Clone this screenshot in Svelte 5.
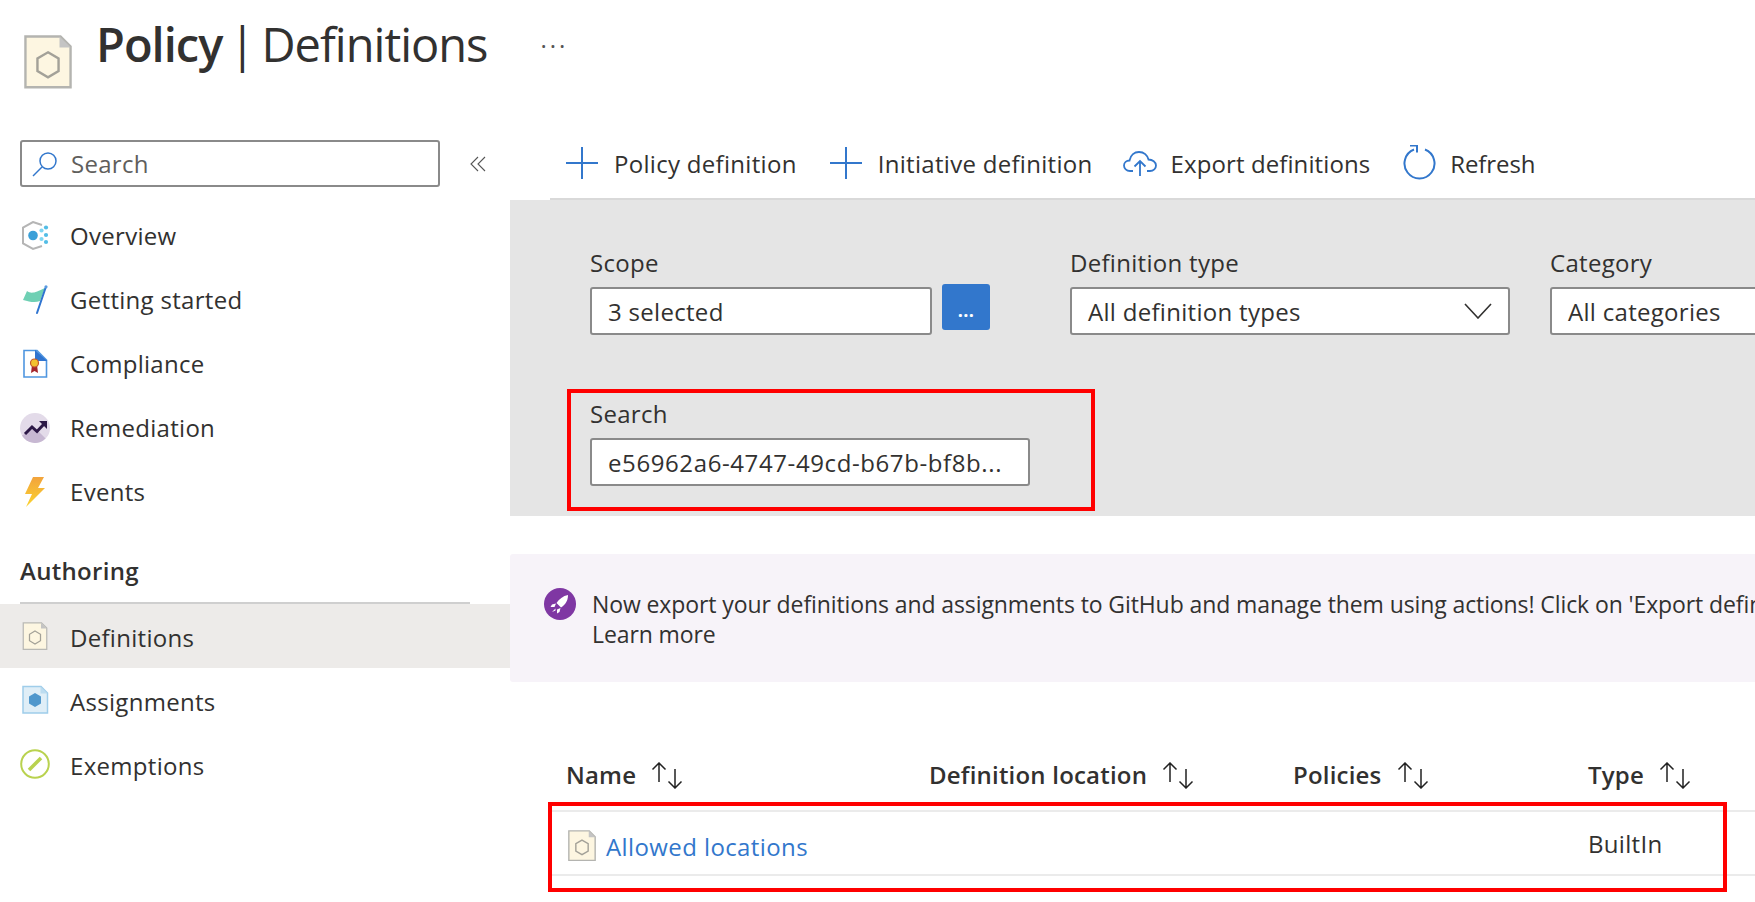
<script>
	const nav = [
		{ label: 'Overview', icon: 'overview' },
		{ label: 'Getting started', icon: 'started' },
		{ label: 'Compliance', icon: 'compliance' },
		{ label: 'Remediation', icon: 'remediation' },
		{ label: 'Events', icon: 'events' }
	];
	const authoring = [
		{ label: 'Definitions', icon: 'definition', active: true },
		{ label: 'Assignments', icon: 'assignment' },
		{ label: 'Exemptions', icon: 'exemption' }
	];
	const columns = ['Name', 'Definition location', 'Policies', 'Type'];
</script>

{#snippet policyDoc(size)}
	<svg width={size} height={size * 1.12} viewBox="0 0 50 56">
		<path d="M1.500 1.500H38L48.500 12V54.500H1.500Z" fill="#fdf6e1" stroke="#b4b4b0" stroke-width="2.500" />
		<path d="M37 1.500V13H48.500Z" fill="#c4c4c4" />
		<path d="M25 18L36 24.500V37.500L25 44L14 37.500V24.500Z" fill="none" stroke="#a3a198" stroke-width="2.500" />
	</svg>
{/snippet}

{#snippet navIcon(name)}
	<svg class="nav-icon" width="30" height="30" viewBox="0 0 30 30">
		{#if name === 'overview'}
			<path d="M22 4L13 1L3 6.500V22.500L13 28L22 25" fill="none" stroke="#b5b5b5" stroke-width="2" />
			<circle cx="13" cy="14.500" r="4.800" fill="#3aa0d8" />
			<circle cx="26" cy="6.500" r="2.100" fill="#52bde6" />
			<circle cx="21.500" cy="9.500" r="2.100" fill="#7fd6f2" />
			<circle cx="26" cy="14" r="2.100" fill="#52bde6" />
			<circle cx="21.500" cy="18" r="2.100" fill="#7fd6f2" />
			<circle cx="26" cy="21" r="2.100" fill="#52bde6" />
		{:else if name === 'started'}
			<path d="M3 15L7 6C11 9 15 8 25 3L20 16C15 18 10 17 3 15Z" fill="#6fd0b4" />
			<path d="M17 28L25.500 3" stroke="#2f74d0" stroke-width="2" stroke-linecap="round" />
			<circle cx="26" cy="1.800" r="1.600" fill="#5a9be0" />
		{:else if name === 'compliance'}
			<path d="M4 1.500H17L26.500 11V28H4Z" fill="#fff" stroke="#4f96e0" stroke-width="1.600" />
			<path d="M15 0.700L27.300 12H15Z" fill="#2f74d0" />
			<path d="M12 16L11 24L14.500 22L18 24L17 16Z" fill="#a4262c" />
			<circle cx="14.500" cy="14" r="4" fill="#f2c22f" stroke="#c4572d" stroke-width="1.200" />
		{:else if name === 'remediation'}
			<circle cx="15" cy="15" r="15" fill="#e3dbe9" />
			<path d="M2 22.500A15 15 0 0 0 25.600 25.600L15 15Z" fill="#c7b8d2" />
			<path d="M5 21L12 14L17 18.500L24 11" fill="none" stroke="#2c1846" stroke-width="3" />
			<path d="M19 8H27V16Z" fill="#2c1846" />
		{:else if name === 'events'}
			<defs>
				<linearGradient id="bolt" x1="0" y1="0" x2="0" y2="1">
					<stop offset="0" stop-color="#f2a33c" />
					<stop offset="1" stop-color="#fbd42f" />
				</linearGradient>
			</defs>
			<path d="M13 0H24L18 11H25L6 30L12 17H5Z" fill="url(#bolt)" />
		{:else if name === 'definition'}
			<svg x="2" y="1" width="26" height="28" viewBox="0 0 50 56">
				<path d="M1.500 1.500H38L48.500 12V54.500H1.500Z" fill="#fdf6e1" stroke="#b9b9b5" stroke-width="2.500" />
				<path d="M37 1.500V13H48.500Z" fill="#c4c4c4" />
				<path d="M25 18L36 24.500V37.500L25 44L14 37.500V24.500Z" fill="none" stroke="#a3a198" stroke-width="2.500" />
			</svg>
		{:else if name === 'assignment'}
			<path d="M3 1.500H21L27.500 8V28H3Z" fill="#dfeef7" stroke="#9fcdea" stroke-width="1.500" />
			<path d="M20.500 1.500V8.500H27.500Z" fill="#bcdcf0" />
			<path d="M15 8L21 11.500V18.500L15 22L9 18.500V11.500Z" fill="#4f97cc" />
		{:else if name === 'exemption'}
			<circle cx="15" cy="15" r="13.800" fill="#fff" stroke="#b9d24f" stroke-width="2" />
			<path d="M9 21L21 9" stroke="#b9d24f" stroke-width="3.500" />
		{/if}
	</svg>
{/snippet}

{#snippet plus()}
	<svg width="32" height="32" viewBox="0 0 32 32"><path d="M0 16H32M16 0V32" stroke="#3277cc" stroke-width="2" /></svg>
{/snippet}

{#snippet sortArrows()}
	<svg width="32" height="27" viewBox="0 0 32 27" fill="none" stroke="#222" stroke-width="1.500">
		<path d="M8 20V1M1.500 7.500L8 1L14.500 7.500" />
		<path d="M24 7V26M17.500 19.500L24 26L30.500 19.500" />
	</svg>
{/snippet}

<div class="page">
	<header class="title-bar">
		<div class="title-icon">{@render policyDoc(48)}</div>
		<h1><b>Policy</b> | Definitions</h1>
		<span class="more">···</span>
	</header>

	<div class="body">
		<aside>
			<div class="side-search-row">
				<div class="side-search">
					<svg width="26" height="26" viewBox="0 0 26 26" fill="none" stroke="#3277cc" stroke-width="1.500">
						<circle cx="16" cy="10" r="8" />
						<path d="M10 16L1 25" />
					</svg>
					<span>Search</span>
				</div>
				<svg class="collapse" width="16" height="16" viewBox="0 0 16 16" fill="none" stroke="#555" stroke-width="1.100">
					<path d="M8 1L1 8L8 15M15 1L8 8L15 15" />
				</svg>
			</div>

			<nav>
				<div class="general">
					{#each nav as item}
						<div class="nav-row">
							{@render navIcon(item.icon)}
							<span>{item.label}</span>
						</div>
					{/each}
				</div>
				<h2>Authoring</h2>
				<div class="authoring">
					{#each authoring as item}
						<div class="nav-row" class:active={item.active}>
							{@render navIcon(item.icon)}
							<span>{item.label}</span>
						</div>
					{/each}
				</div>
			</nav>
		</aside>

		<main>
			<div class="toolbar">
				<button>{@render plus()}<span>Policy definition</span></button>
				<button>{@render plus()}<span>Initiative definition</span></button>
				<button class="export">
					<svg width="34" height="28" viewBox="0 0 34 28" fill="none" stroke="#3277cc" stroke-width="1.800">
						<path d="M10 22H7C3.500 22 1 19.500 1 16.500C1 13.500 3.500 11.500 6.500 11.500C7.500 6 11.500 3 16 3C21 3 24.500 6.500 25.500 10.500C29.500 10.500 33 13 33 16.500C33 19.500 30.500 22 27 22H24" />
						<path d="M17 27V12M11.500 17.500L17 12L22.500 17.500" />
					</svg>
					<span>Export definitions</span>
				</button>
				<button class="refresh">
					<svg width="34" height="36" viewBox="0 0 34 36" fill="none" stroke="#3277cc" stroke-width="2">
						<path d="M22 4.500A15 15 0 1 1 11 4.500" />
						<path d="M7 0.500H14V7.500" />
					</svg>
					<span>Refresh</span>
				</button>
			</div>

			<section class="filters">
				<div class="filter-row">
					<div class="field scope">
						<label for="scope">Scope</label>
						<div class="box" id="scope">3 selected</div>
					</div>
					<div class="dots-btn">...</div>
					<div class="field type">
						<label for="type">Definition type</label>
						<div class="box" id="type">
							All definition types
							<svg width="28" height="16" viewBox="0 0 28 16" fill="none" stroke="#323130" stroke-width="1.600"><path d="M1 1L14 15L27 1" /></svg>
						</div>
					</div>
					<div class="field category">
						<label for="category">Category</label>
						<div class="box" id="category">All categories</div>
					</div>
				</div>
				<div class="search-field">
					<label for="policy-search">Search</label>
					<div class="box" id="policy-search">e56962a6-4747-49cd-b67b-bf8b...</div>
				</div>
			</section>

			<section class="banner">
				<svg width="32" height="32" viewBox="0 0 32 32">
					<circle cx="16" cy="16" r="16" fill="#7f37a3" />
					<path d="M24 7C19 8 15 11 12.500 15L17 19.500C21 17 24 13 24 7Z" fill="#fff" />
					<path d="M12 15.500L8 16.500L6.500 19L10.500 19ZM16.500 20L15.500 24L13 25.500L13 21.500ZM11.500 20.500L8 24L11.500 22.500Z" fill="#fff" />
				</svg>
				<p>Now export your definitions and assignments to GitHub and manage them using actions! Click on 'Export definitions' to get started.<br />Learn more</p>
			</section>

			<section class="table">
				<div class="thead">
					{#each columns as col}
						<div class="th"><span>{col}</span>{@render sortArrows()}</div>
					{/each}
				</div>
				<div class="row">
					<div class="name-cell">
						{@render policyDoc(28)}
						<a href="#allowed">Allowed locations</a>
					</div>
					<div></div>
					<div></div>
					<div class="type-cell">BuiltIn</div>
					<div class="highlight"></div>
				</div>
			</section>
		</main>
	</div>
</div>

<style>
	:global(body) {
		background: #fff;
		overflow: hidden;
	}

	.page {
		width: 1755px;
		height: 902px;
		overflow: hidden;
		font-family: 'Open Sans', 'Noto Sans', sans-serif;
		font-size: 24px;
		letter-spacing: 0.3px;
		color: #323130;
		white-space: nowrap;
	}

	.title-bar {
		height: 130px;
		display: flex;
		align-items: flex-start;
		box-sizing: border-box;
		padding-left: 24px;
	}

	.title-icon {
		margin-top: 35px;
		width: 48px;
	}

	h1 {
		margin: 11px 0 0 24px;
		font-size: 47px;
		line-height: 66px;
		font-weight: 400;
		letter-spacing: -1px;
		word-spacing: -4px;
	}

	h1 b {
		font-weight: 600;
	}

	.more {
		margin: 29px 0 0 53px;
		font-size: 24px;
		line-height: 34px;
		letter-spacing: 3px;
		color: #555;
	}

	.body {
		display: flex;
	}

	aside {
		width: 510px;
		flex: none;
	}

	.side-search-row {
		display: flex;
		align-items: center;
		margin: 10px 0 0 20px;
		height: 47px;
	}

	.side-search {
		width: 420px;
		height: 47px;
		box-sizing: border-box;
		border: 2px solid #8a8a8a;
		border-radius: 3px;
		display: flex;
		align-items: center;
		gap: 13px;
		padding-left: 10px;
		color: #605e5c;
	}

	.collapse {
		margin-left: 30px;
	}

	nav {
		margin-top: 17px;
	}

	.nav-row {
		height: 64px;
		display: flex;
		align-items: center;
		gap: 20px;
		padding-left: 20px;
	}

	.nav-row.active {
		background: #edebe9;
	}

	.general .nav-row span {
		padding-bottom: 2px;
	}

	.authoring .nav-row span {
		padding-top: 3px;
	}

	h2 {
		margin: 0 40px 0 20px;
		height: 80px;
		box-sizing: border-box;
		padding-top: 30px;
		border-bottom: 2px solid #cfcfcf;
		font-size: 24px;
		line-height: 34px;
		font-weight: 600;
	}

	main {
		flex: 1;
		min-width: 0;
		overflow: hidden;
	}

	.toolbar {
		height: 70px;
		box-sizing: border-box;
		margin-left: 40px;
		padding: 0 0 2px 16px;
		border-bottom: 2px solid #d9d9d9;
		display: flex;
		align-items: center;
		gap: 33px;
	}

	.toolbar button {
		display: flex;
		align-items: center;
		gap: 16px;
		padding: 0;
		border: 0;
		background: none;
		font: inherit;
		letter-spacing: inherit;
		color: inherit;
	}

	.toolbar .export {
		margin-left: -3px;
		gap: 14px;
		letter-spacing: 0.1px;
	}

	.toolbar .refresh {
		gap: 13px;
		letter-spacing: -0.1px;
	}

	.filters {
		height: 316px;
		box-sizing: border-box;
		background: #e5e5e5;
		padding: 48px 0 0 80px;
	}

	.filter-row {
		display: flex;
		align-items: flex-start;
	}

	.field {
		flex: none;
	}

	label {
		display: block;
		line-height: 30px;
		margin-bottom: 9px;
	}

	.box {
		height: 48px;
		box-sizing: border-box;
		background: #fff;
		border: 2px solid #8a8a8a;
		border-radius: 3px;
		padding: 0 16px;
		display: flex;
		align-items: center;
		justify-content: space-between;
	}

	.scope {
		width: 342px;
	}

	.dots-btn {
		flex: none;
		width: 48px;
		height: 46px;
		margin: 36px 80px 0 10px;
		background: #3277cc;
		border-radius: 3px;
		color: #fff;
		font-weight: 700;
		font-size: 18px;
		text-align: center;
		line-height: 52px;
	}

	.type {
		width: 440px;
		margin-right: 40px;
	}

	.category {
		width: 300px;
	}

	.search-field {
		width: 528px;
		height: 122px;
		box-sizing: border-box;
		margin: 54px 0 0 -23px;
		border: 4px solid #f00;
		padding: 6px 0 0 19px;
	}

	.search-field .box {
		width: 440px;
		letter-spacing: 0.6px;
	}

	.banner {
		margin-top: 38px;
		height: 128px;
		box-sizing: border-box;
		background: #f7f3f9;
		border-radius: 3px 0 0 3px;
		padding: 34px 0 0 34px;
		display: flex;
		align-items: flex-start;
		gap: 16px;
	}

	.banner svg {
		flex: none;
	}

	.banner p {
		margin: 1px 0 0;
		line-height: 30px;
		font-size: 23px;
		letter-spacing: -0.1px;
	}

	.table {
		margin-top: 58px;
		padding-left: 56px;
		padding-bottom: 30px;
	}

	.thead,
	.row {
		display: grid;
		grid-template-columns: 363px 364px 295px 1fr;
	}

	.thead {
		height: 70px;
		align-items: center;
	}

	.th {
		display: flex;
		align-items: center;
		gap: 15px;
		font-weight: 600;
		letter-spacing: 0.2px;
	}

	.th span {
		padding-bottom: 2px;
	}

	.row {
		position: relative;
		height: 66px;
		box-sizing: border-box;
		margin-left: -17px;
		padding-left: 17px;
		border-top: 2px solid #ebebeb;
		border-bottom: 2px solid #ebebeb;
		align-items: center;
		line-height: 30px;
	}

	.name-cell {
		display: flex;
		align-items: center;
		gap: 10px;
		padding: 5px 0 0 2px;
	}

	.type-cell {
		padding-top: 1px;
	}

	a {
		color: #3277cc;
		text-decoration: none;
		padding-top: 2px;
		letter-spacing: 0.4px;
	}

	.highlight {
		position: absolute;
		left: -1px;
		top: -10px;
		width: 1179px;
		height: 90px;
		box-sizing: border-box;
		border: 4px solid #f00;
	}
</style>
